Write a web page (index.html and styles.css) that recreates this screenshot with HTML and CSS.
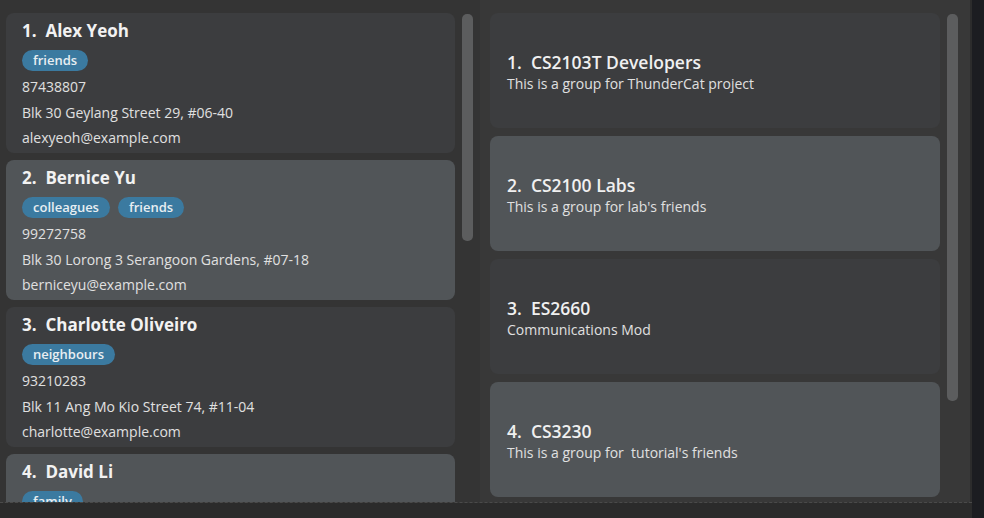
FILE: index.html
```html
<!DOCTYPE html>
<html lang="en">
<head>
    <meta charset="UTF-8">
    <meta name="viewport" content="width=device-width, initial-scale=1.0">
    <title>Address Book</title>
    <link rel="stylesheet" href="styles.css">
</head>
<body>

    <div class="app">
        <div class="panes">
            <div class="pane person-pane">
                <div class="list">
                    <div class="card person odd">
                        <div class="name">1.&nbsp; Alex Yeoh</div>
                        <div class="tags"><span class="tag">friends</span></div>
                        <div class="field">87438807</div>
                        <div class="field">Blk 30 Geylang Street 29, #06-40</div>
                        <div class="field">alexyeoh@example.com</div>
                    </div>
                    <div class="card person even">
                        <div class="name">2.&nbsp; Bernice Yu</div>
                        <div class="tags"><span class="tag">colleagues</span><span class="tag">friends</span></div>
                        <div class="field">99272758</div>
                        <div class="field">Blk 30 Lorong 3 Serangoon Gardens, #07-18</div>
                        <div class="field">berniceyu@example.com</div>
                    </div>
                    <div class="card person odd">
                        <div class="name">3.&nbsp; Charlotte Oliveiro</div>
                        <div class="tags"><span class="tag">neighbours</span></div>
                        <div class="field">93210283</div>
                        <div class="field">Blk 11 Ang Mo Kio Street 74, #11-04</div>
                        <div class="field">charlotte@example.com</div>
                    </div>
                    <div class="card person even">
                        <div class="name">4.&nbsp; David Li</div>
                        <div class="tags"><span class="tag">family</span></div>
                        <div class="field">91031282</div>
                        <div class="field">Blk 436 Serangoon Gardens Street 26, #16-43</div>
                        <div class="field">lidavid@example.com</div>
                    </div>
                </div>
                <div class="scrollbar person-scroll"></div>
            </div>

            <div class="pane group-pane">
                <div class="list">
                    <div class="card group odd">
                        <div class="group-name">1.&nbsp; CS2103T Developers</div>
                        <div class="group-desc">This is a group for ThunderCat project</div>
                    </div>
                    <div class="card group even">
                        <div class="group-name">2.&nbsp; CS2100 Labs</div>
                        <div class="group-desc">This is a group for lab's friends</div>
                    </div>
                    <div class="card group odd">
                        <div class="group-name">3.&nbsp; ES2660</div>
                        <div class="group-desc">Communications Mod</div>
                    </div>
                    <div class="card group even">
                        <div class="group-name">4.&nbsp; CS3230</div>
                        <div class="group-desc">This is a group for &nbsp;tutorial's friends</div>
                    </div>
                </div>
                <div class="scrollbar group-scroll"></div>
            </div>
        </div>
        <div class="status"></div>
    </div>

</body>
</html>
```

FILE: styles.css
```css
body {
    margin: 0;
    width: 984px;
    height: 518px;
    overflow: hidden;
    background-color: #1c1d21;
    font-family: 'Open Sans', 'Liberation Sans', sans-serif;
    color: #e6e6e6;
}

.app {
    width: 972px;
    height: 518px;
    background-color: #2b2b2b;
}

.panes {
    display: flex;
    height: 503px;
    background-color: #343434;
    border-bottom: 1px dashed #4a4a4a;
    box-sizing: border-box;
}

.pane {
    display: flex;
    align-items: flex-start;
    padding-top: 13px;
    box-sizing: border-box;
    height: 100%;
}

.person-pane {
    width: 480px;
    padding-left: 6px;
    gap: 7px;
}

.group-pane {
    width: 492px;
    padding-left: 10px;
    gap: 7px;
    background-color: #383838;
    border-right: 2px solid #2c2c2c;
}

.list {
    display: flex;
    flex-direction: column;
    overflow: hidden;
    height: 100%;
}

.person-pane .list {
    width: 449px;
    gap: 7px;
}

.group-pane .list {
    width: 450px;
    gap: 8px;
}

.card {
    flex-shrink: 0;
    border-radius: 8px;
    box-sizing: border-box;
}

.odd {
    background-color: #3c3d3f;
}

.even {
    background-color: #515558;
}

.person {
    height: 140px;
    padding: 6px 16px 0;
}

.name {
    font-size: 17px;
    font-weight: 700;
    line-height: 24px;
    color: #f2f2f2;
}

.tags {
    display: flex;
    gap: 8px;
    margin-top: 7px;
    margin-bottom: 3px;
}

.tag {
    background-color: #3b7aa0;
    color: #e8eef2;
    font-size: 13px;
    font-weight: 600;
    line-height: 21px;
    padding: 0 11px;
    border-radius: 11px;
}

.field {
    font-size: 14px;
    line-height: 25.5px;
    color: #e0e0e0;
}

.group {
    height: 115px;
    padding: 4px 17px 0;
    display: flex;
    flex-direction: column;
    justify-content: center;
}

.group-name {
    font-size: 17.5px;
    font-weight: 600;
    line-height: 22px;
    color: #f0f0f0;
}

.group-desc {
    font-size: 14px;
    line-height: 21px;
    color: #e0e0e0;
}

.scrollbar {
    width: 11px;
    border-radius: 5px;
    background-color: #5c5d5e;
    margin-top: 1px;
    flex-shrink: 0;
}

.person-scroll {
    height: 227px;
}

.group-scroll {
    height: 387px;
}

.status {
    height: 15px;
}
```
